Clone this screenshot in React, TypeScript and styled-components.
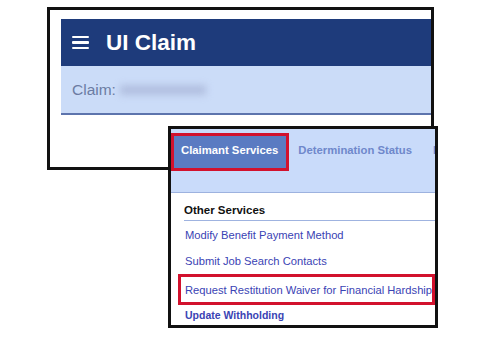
import styled, { createGlobalStyle } from "styled-components";

const GlobalStyle = createGlobalStyle`
  html, body {
    margin: 0;
    padding: 0;
    background: #ffffff;
  }
  body {
    font-family: "Liberation Sans", Arial, sans-serif;
  }
`;

const Canvas = styled.div`
  position: relative;
  width: 503px;
  height: 345px;
  overflow: hidden;
  background: #ffffff;
  padding: 7px 0 0 47px;
  box-sizing: border-box;
`;

/* first screenshot: the UI Claim header */
const ClaimFrame = styled.div`
  width: 387px;
  height: 163px;
  box-sizing: border-box;
  border: 3px solid #111111;
  background: #ffffff;
  padding: 9px 0 0 11px;
  display: flex;
  flex-direction: column;
`;

const Header = styled.div`
  height: 47px;
  background: #1e3b7b;
  display: flex;
  align-items: center;
  padding-left: 11px;
  gap: 17px;
`;

const Burger = styled.div`
  width: 17px;
  display: flex;
  flex-direction: column;
  gap: 3px;

  span {
    display: block;
    height: 2.5px;
    background: #ffffff;
    border-radius: 1px;
  }
`;

const Title = styled.h1`
  margin: 0;
  color: #ffffff;
  font-size: 22.5px;
  font-weight: 700;
`;

const ClaimBar = styled.div`
  height: 47px;
  background: #cbdcf8;
  border-bottom: 2px solid #5d74ad;
  display: flex;
  align-items: center;
  padding-left: 11px;
  gap: 4px;
`;

const ClaimLabel = styled.span`
  color: #6c7ca3;
  font-size: 15.5px;
`;

const Redacted = styled.span`
  display: inline-block;
  width: 86px;
  height: 10px;
  background: #b1bfe0;
  filter: blur(3.5px);
`;

/* second screenshot: the services menu, laid over the first */
const MenuFrame = styled.div`
  position: absolute;
  left: 168px;
  top: 126px;
  width: 270px;
  height: 202px;
  box-sizing: border-box;
  border: 3px solid #111111;
  background: #ffffff;
  overflow: hidden;
  display: flex;
  flex-direction: column;
`;

const TabStrip = styled.div`
  height: 64px;
  flex-shrink: 0;
  box-sizing: border-box;
  background: #c9dbfa;
  border-bottom: 1px solid #9db2df;
  padding-top: 4px;
  display: flex;
  align-items: flex-start;
  gap: 9px;
  white-space: nowrap;
`;

const Tab = styled.div<{ $active?: boolean }>`
  height: 38px;
  box-sizing: border-box;
  padding: ${(p) => (p.$active ? "8px 8px 0 7px" : "11px 12px 0 0")};
  background: ${(p) => (p.$active ? "#5a7bc2" : "transparent")};
  border: ${(p) => (p.$active ? "3px solid #d2112d" : "none")};
  color: ${(p) => (p.$active ? "#ffffff" : "#6f88cb")};
  font-size: 11.3px;
  font-weight: 700;
  flex-shrink: 0;
`;

const Content = styled.div`
  padding: 11px 0 0 7px;
  display: flex;
  flex-direction: column;
`;

const SectionTitle = styled.div`
  margin-left: 6px;
  padding-bottom: 4px;
  border-bottom: 1px solid #9fb3e0;
  color: #111111;
  font-size: 11.5px;
  font-weight: 700;
`;

const LinkList = styled.ul`
  list-style: none;
  margin: 1px 0 0 0;
  padding: 0;
  display: flex;
  flex-direction: column;
`;

const LinkItem = styled.li<{ $marked?: boolean; $last?: boolean }>`
  height: ${(p) => (p.$marked ? "31px" : p.$last ? "20px" : "26px")};
  box-sizing: border-box;
  display: flex;
  align-items: center;
  padding-left: ${(p) => (p.$marked ? "4px" : "7px")};
  border: ${(p) => (p.$marked ? "3px solid #d2112d" : "none")};
  color: #3a43b4;
  font-size: ${(p) => (p.$last ? "10.5px" : "11.2px")};
  font-weight: ${(p) => (p.$last ? 700 : 400)};
  white-space: nowrap;
  overflow: hidden;
`;

const links = [
  "Modify Benefit Payment Method",
  "Submit Job Search Contacts",
  "Request Restitution Waiver for Financial Hardship",
  "Update Withholding",
];

export default function App() {
  return (
    <>
      <GlobalStyle />
      <Canvas>
        <ClaimFrame>
          <Header>
            <Burger>
              <span />
              <span />
              <span />
            </Burger>
            <Title>UI Claim</Title>
          </Header>
          <ClaimBar>
            <ClaimLabel>Claim:</ClaimLabel>
            <Redacted />
          </ClaimBar>
        </ClaimFrame>

        <MenuFrame>
          <TabStrip>
            <Tab $active>Claimant Services</Tab>
            <Tab>Determination Status</Tab>
            <Tab>Payment History</Tab>
          </TabStrip>
          <Content>
            <SectionTitle>Other Services</SectionTitle>
            <LinkList>
              {links.map((label, i) => (
                <LinkItem key={label} $marked={i === 2} $last={i === links.length - 1}>
                  {label}
                </LinkItem>
              ))}
            </LinkList>
          </Content>
        </MenuFrame>
      </Canvas>
    </>
  );
}
